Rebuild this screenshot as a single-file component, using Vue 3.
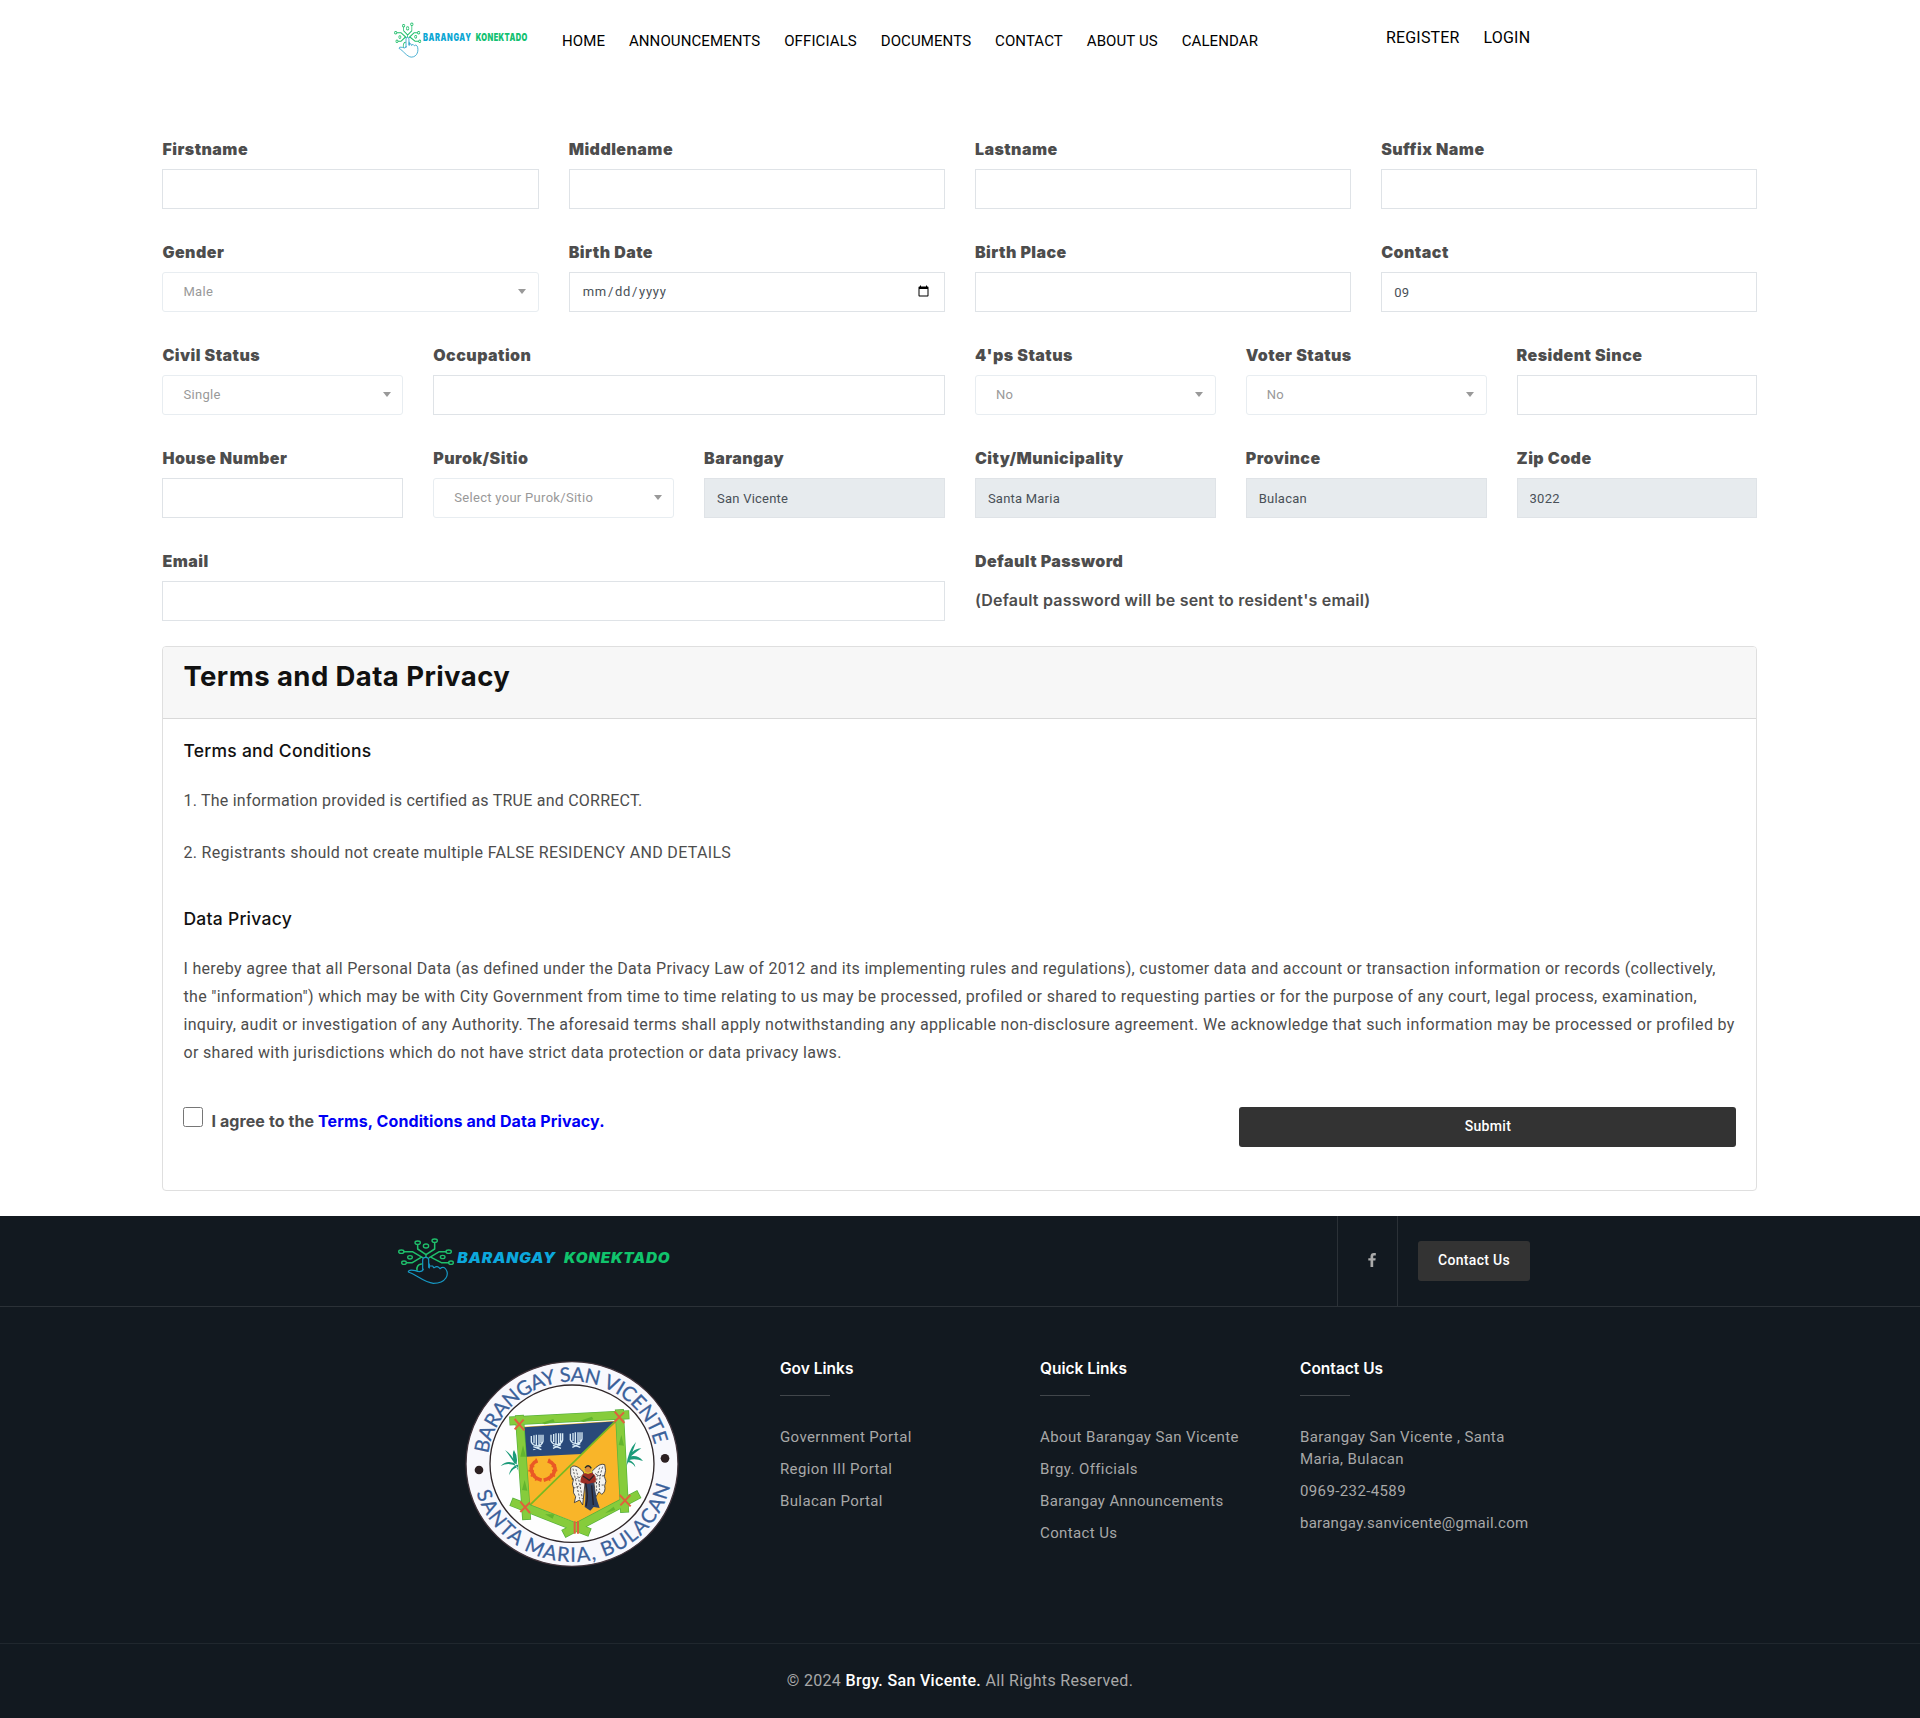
<script setup>
const navLinks = ['HOME', 'ANNOUNCEMENTS', 'OFFICIALS', 'DOCUMENTS', 'CONTACT', 'ABOUT US', 'CALENDAR']
const accountLinks = ['REGISTER', 'LOGIN']

// span is the number of grid columns out of 12
const fields = [
  { label: 'Firstname', type: 'text', span: 3 },
  { label: 'Middlename', type: 'text', span: 3 },
  { label: 'Lastname', type: 'text', span: 3 },
  { label: 'Suffix Name', type: 'text', span: 3 },
  { label: 'Gender', type: 'select', span: 3, value: 'Male' },
  { label: 'Birth Date', type: 'date', span: 3 },
  { label: 'Birth Place', type: 'text', span: 3 },
  { label: 'Contact', type: 'text', span: 3, value: '09' },
  { label: 'Civil Status', type: 'select', span: 2, value: 'Single' },
  { label: 'Occupation', type: 'text', span: 4 },
  { label: "4'ps Status", type: 'select', span: 2, value: 'No' },
  { label: 'Voter Status', type: 'select', span: 2, value: 'No' },
  { label: 'Resident Since', type: 'text', span: 2 },
  { label: 'House Number', type: 'text', span: 2 },
  { label: 'Purok/Sitio', type: 'select', span: 2, value: 'Select your Purok/Sitio' },
  { label: 'Barangay', type: 'text', span: 2, value: 'San Vicente', readonly: true },
  { label: 'City/Municipality', type: 'text', span: 2, value: 'Santa Maria', readonly: true },
  { label: 'Province', type: 'text', span: 2, value: 'Bulacan', readonly: true },
  { label: 'Zip Code', type: 'text', span: 2, value: '3022', readonly: true },
  { label: 'Email', type: 'text', span: 6 },
  { label: 'Default Password', type: 'note', span: 6, value: "(Default password will be sent to resident's email)" }
]

const privacyLines = [
  'I hereby agree that all Personal Data (as defined under the Data Privacy Law of 2012 and its implementing rules and regulations), customer data and account or transaction information or records (collectively,',
  'the "information") which may be with City Government from time to time relating to us may be processed, profiled or shared to requesting parties or for the purpose of any court, legal process, examination,',
  'inquiry, audit or investigation of any Authority. The aforesaid terms shall apply notwithstanding any applicable non-disclosure agreement. We acknowledge that such information may be processed or profiled by',
  'or shared with jurisdictions which do not have strict data protection or data privacy laws.'
]

const footerColumns = [
  { title: 'Gov Links', items: ['Government Portal', 'Region III Portal', 'Bulacan Portal'] },
  { title: 'Quick Links', items: ['About Barangay San Vicente', 'Brgy. Officials', 'Barangay Announcements', 'Contact Us'] },
  { title: 'Contact Us', items: ['Barangay San Vicente , Santa Maria, Bulacan', '0969-232-4589', 'barangay.sanvicente@gmail.com'] }
]
</script>

<template>
  <div class="page">
    <!-- Shared symbol: circuit nodes above a pointing hand -->
    <svg class="defs" width="0" height="0" aria-hidden="true">
      <defs>
        <g id="mark" fill="none" stroke-linecap="round" stroke-linejoin="round">
          <g stroke="#1fbf6b" stroke-width="4.6">
            <path d="M113 104V117L138 134L164 117V98M72 125H97L128 143M198 125H178L148 143M206 158H184L155 143M80 158H97L122 143M138 134V142M111 181Q109 164 124 162" />
            <g stroke-width="4">
              <ellipse cx="64" cy="125" rx="8" ry="5" /><ellipse cx="113" cy="98" rx="8" ry="5" />
              <ellipse cx="164" cy="92" rx="8" ry="5" /><ellipse cx="206" cy="125" rx="8" ry="5" />
              <ellipse cx="213" cy="158" rx="7" ry="5" /><ellipse cx="72" cy="158" rx="7" ry="5" />
              <ellipse cx="138" cy="108" rx="8" ry="6" /><ellipse cx="90" cy="142" rx="7" ry="5" />
              <ellipse cx="188" cy="141" rx="7" ry="5" />
            </g>
          </g>
          <path stroke="#1698c4" stroke-width="3.6" d="M128 182V150Q128 142 137 142Q146 142 146 150V172M148 162V174M148 168H158L161 173M163 173Q172 165 180 176Q190 168 197 177C208 192 200 220 160 220C132 218 110 194 85 186Q84 178 106 182Q124 190 130 178" />
        </g>
      </defs>
    </svg>

    <header class="header">
      <svg class="brand" width="182" height="90" viewBox="0 0 546 270">
        <use href="#mark" transform="translate(16 2) scale(.485 .77)" />
        <text class="brand-text small" transform="translate(129 124) scale(.72 1)" textLength="200" fill="#0ca7d4">BARANGAY</text>
        <text class="brand-text small" transform="translate(287 124) scale(.72 1)" textLength="215" fill="#12c172">KONEKTADO</text>
      </svg>
      <nav class="nav">
        <a v-for="link in navLinks" :key="link">{{ link }}</a>
      </nav>
      <nav class="account">
        <a v-for="link in accountLinks" :key="link">{{ link }}</a>
      </nav>
    </header>

    <main class="content">
      <form class="form" @submit.prevent>
        <div v-for="f in fields" :key="f.label" class="field" :class="'span-' + f.span">
          <label>{{ f.label }}</label>
          <div v-if="f.type === 'select'" class="select">
            <span>{{ f.value }}</span>
            <i class="caret"></i>
          </div>
          <div v-else-if="f.type === 'note'" class="note">{{ f.value }}</div>
          <input v-else class="input" :class="{ locked: f.readonly }" :type="f.type" :value="f.value" :readonly="f.readonly" />
        </div>
      </form>

      <section class="card">
        <div class="card-head"><h3>Terms and Data Privacy</h3></div>
        <div class="card-body">
          <h4>Terms and Conditions</h4>
          <p class="rule">1. The information provided is certified as TRUE and CORRECT.</p>
          <p class="rule">2. Registrants should not create multiple FALSE RESIDENCY AND DETAILS</p>
          <h4 class="second">Data Privacy</h4>
          <p class="privacy"><span v-for="line in privacyLines" :key="line">{{ line }}</span></p>
          <div class="agree">
            <label class="agree-label">
              <input type="checkbox" />
              <span>I agree to the <a>Terms, Conditions and Data Privacy.</a></span>
            </label>
            <button class="submit" type="button">Submit</button>
          </div>
        </div>
      </section>
    </main>

    <footer class="footer">
      <div class="footer-top">
        <div class="wrap top-row">
          <svg class="footer-brand" width="320" height="90" viewBox="0 18 960 270">
            <use href="#mark" />
            <text class="brand-text italic" x="232" y="159" textLength="296" lengthAdjust="spacingAndGlyphs" fill="#0ca7dc">BARANGAY</text>
            <text class="brand-text italic" x="552" y="159" textLength="319" lengthAdjust="spacingAndGlyphs" fill="#10c46c">KONEKTADO</text>
          </svg>
          <div class="social">
            <svg width="8" height="14" viewBox="0 0 8 14"><path fill="#aaa" d="M7.8.1V2.4H6.5C5.4 2.4 5.2 2.9 5.2 3.7V5.2H7.7L7.4 7.6H5.2V14H2.5V7.6H.3V5.2H2.5V3.4C2.5 1.2 3.8 0 5.8 0Z" /></svg>
          </div>
          <button class="contact" type="button">Contact Us</button>
        </div>
      </div>

      <div class="wrap footer-main">
        <div class="seal">
          <svg width="240" height="230" viewBox="0 0 720 690">
            <defs>
              <path id="arc-top" d="M115 311A254 247 0 0 1 615 288.4" />
              <path id="arc-bottom" d="M79 428A301 293 0 0 0 663 395" />
            </defs>
            <ellipse cx="366" cy="342" rx="318" ry="307" fill="#f8f8fd" stroke="#41343b" stroke-width="4" />
            <ellipse cx="366" cy="341" rx="246" ry="236" fill="#fefefe" stroke="#302729" stroke-width="4" />
            <g class="seal-text">
              <text><textPath href="#arc-top" textLength="698">BARANGAY SAN VICENTE</textPath></text>
              <text><textPath href="#arc-bottom" textLength="780">SANTA MARIA, BULACAN</textPath></text>
            </g>
            <circle cx="87" cy="360" r="13" fill="#2c2022" /><circle cx="645" cy="325" r="13" fill="#2c2022" />
            <g fill="#1b9b79">
              <path d="M205 362Q188 328 165 300Q181 310 190 326Q186 308 192 300Q204 320 200 340ZM204 345Q173 325 152 348Q178 334 204 352ZM201 344Q180 352 177 376Q188 354 204 352Z" />
              <path d="M529 350Q533 302 558 276Q553 292 547 306Q559 295 574 295Q558 306 543 319Q565 315 579 333Q555 324 538 330Q555 338 556 352Q547 337 534 337Z" />
            </g>
            <path fill="#f9b529" d="M222 230L503 212L519 452L380 518L232 462Z" />
            <path fill="#29497a" d="M222 232L500 214L394 312L228 320Z" />
            <path stroke="#78ba21" stroke-width="5" d="M504 206L235 470" />
            <g stroke="#55b13c" stroke-width="27"><path d="M178 213L538 194M208 195L230 510M508 178L524 488M183 455L420 548M568 432L340 552" /></g>
            <g stroke="#86cc3c" stroke-width="23"><path d="M180 213L536 194M208 197L230 508M508 180L524 486M185 456L418 547M566 433L342 551" /></g>
            <g fill="#63b52e"><path d="M275 219l35-12 4 8-30 8ZM390 212l36-12 4 8-30 8ZM211 320l8-34 9 34ZM506 285l8-30 8 32ZM216 420l8-30 8 32ZM285 493l28 0-5 13ZM465 490l26-20 5 10Z" /></g>
            <g stroke="#e0603c" stroke-width="6"><path d="M194 207l29 34M221 209l-27 29M494 185l29 34M522 187l-29 29M211 455l29 34M240 457l-29 29M509 435l33 34M541 435l-30 31M374 514v37M384 514v37" /></g>
            <g fill="none" stroke="#d8eaf5" stroke-width="4">
              <path id="trident" d="M244 258V276Q248 286 262 288Q276 286 279 274V254M252 256V280M259 254V286M267 254V286M273 254V280M250 299L274 288M250 290L274 299" />
              <use href="#trident" x="59" y="-4" /><use href="#trident" x="117" y="-7" />
            </g>
            <g fill="none" stroke="#ea5925">
              <path stroke-width="11" d="M262 332C232 344 241 382 275 391M294 332C329 345 317 381 281 391" />
              <path stroke-width="5" d="M239 346l14 4M235 362l17 1M242 379l14-7M258 326l3 13M318 344l-13 6M322 361l-16 1M315 379l-15-7M299 326l-4 13M256 392l5-10M300 392l-6-10" />
            </g>
            <g stroke="#303036" stroke-width="2.5" stroke-linejoin="round">
              <path fill="#f4f3ee" d="M400 366C386 349 368 342 362 354Q358 375 370 390Q364 402 371 415Q367 429 377 440L373 458L389 450L398 465L406 391ZM426 364Q450 337 464 344Q470 361 463 379Q472 394 464 407Q468 426 455 433L447 425L437 441L431 391Z" />
              <path fill="none" stroke-dasharray="6 5" d="M369 356Q379 400 389 446M378 358Q390 400 397 447M458 350Q445 390 449 420M449 353Q435 390 441 430M365 387Q387 388 398 374M370 414Q387 412 398 397M462 377Q446 381 434 369M461 405Q447 407 434 393" />
            </g>
            <path fill="#314263" d="M403 390L430 389Q434 433 449 474L431 471L421 482L404 471Q409 431 403 390Z" />
            <path fill="#9b2e25" d="M403 370Q392 375 391 397L408 403L437 397Q441 375 426 369Z" />
            <circle cx="414" cy="358" r="12" fill="#d98b3c" stroke="#dcd329" stroke-width="3" />
            <path stroke="#262128" stroke-width="4" fill="none" d="M405 354Q414 340 424 355M399 378L418 391L432 376M407 399Q416 440 408 469M425 406L430 465" />
          </svg>
        </div>
        <div v-for="col in footerColumns" :key="col.title" class="col">
          <h5>{{ col.title }}</h5>
          <ul><li v-for="item in col.items" :key="item">{{ item }}</li></ul>
        </div>
      </div>

      <div class="copyright">© 2024 <b>Brgy. San Vicente.</b> All Rights Reserved.</div>
    </footer>
  </div>
</template>

<style>
body { margin: 0; background: #fff; }
</style>

<style scoped>
* { box-sizing: border-box; }
.page { font-family: Roboto, sans-serif; color: #4d4d4d; font-size: 16px; letter-spacing: .33px; }
.defs { display: block; }
h3, h4, h5, p, ul { margin: 0; padding: 0; }
.header { display: flex; height: 137px; padding-left: 380px; color: #000; }
.brand { display: block; }
.brand-text { font-family: Inter, sans-serif; font-weight: 900; }
.small { font-size: 31px; letter-spacing: 0; }
.italic { font-size: 42px; font-style: italic; letter-spacing: 2px; }
.nav { display: flex; gap: 23.9px; padding-top: 29px; font-size: 15px; line-height: 24px; letter-spacing: .1px; width: 824px; }
.account { display: flex; gap: 24px; padding-top: 26px; line-height: 24px; letter-spacing: .17px; }

.content { width: 1595px; margin-left: 162.45px; }
.form { display: grid; grid-template-columns: repeat(12, 1fr); column-gap: 30px; row-gap: 31px; }
.span-2 { grid-column: span 2; }
.span-3 { grid-column: span 3; }
.span-4 { grid-column: span 4; }
.span-6 { grid-column: span 6; }
.field { min-width: 0; height: 72px; }
.field label { display: block; height: 32px; line-height: 24px; font-family: Inter, sans-serif; font-size: 16px; font-weight: 900; letter-spacing: .45px; white-space: nowrap; }
.input { display: block; width: 100%; height: 40px; padding: 6px 12px; border: 1px solid #dfe3e7; background: #fff; color: #495057; font-family: Roboto, sans-serif; font-size: 13px; letter-spacing: .22px; outline: 0; border-radius: 0; }
.input[type="date"] { letter-spacing: .7px; padding: 5px 12px 7px; }
.locked { background: #e7ebee; }
.select { display: flex; align-items: center; justify-content: space-between; height: 40px; padding: 0 11.5px 2px 20px; border: 1px solid #e8edf1; border-radius: 3px; color: #999; font-size: 13px; letter-spacing: .3px; }
.caret { border: 4.5px solid transparent; border-top: 5px solid #999; border-bottom: 0; }
.note { padding-top: 7px; line-height: 24px; font-family: Inter, sans-serif; font-weight: 600; letter-spacing: .2px; }

.card { margin-top: 25px; height: 545px; border: 1px solid #dfdfdf; border-radius: 4px; overflow: hidden; }
.card-head { height: 72px; padding: 12px 20px; background: #f7f7f7; border-bottom: 1px solid #d9d9d9; }
.card-head h3 { font-family: Inter, sans-serif; font-size: 27.5px; line-height: 34px; font-weight: 700; color: #111; letter-spacing: .42px; }
.card-body { padding: 21px 20px 0; }
.card-body h4 { font-family: Inter, sans-serif; font-size: 17.5px; line-height: 22px; font-weight: 500; color: #111; letter-spacing: .25px; }
.card-body h4.second { margin-top: 41px; }
.rule { margin-top: 25px; line-height: 28px; letter-spacing: .23px; }
.rule + .rule { margin-top: 24px; letter-spacing: .32px; }
.privacy { margin-top: 25px; line-height: 28px; letter-spacing: .347px; }
.privacy span { display: block; white-space: nowrap; }
.privacy span:first-child { letter-spacing: .32px; }
.agree { display: flex; justify-content: space-between; margin-top: 40px; }
.agree-label { display: flex; font-family: Inter, sans-serif; font-weight: 700; letter-spacing: .1px; }
.agree-label input { width: 20px; height: 20px; margin: 0 8px 0 0; }
.agree-label span { line-height: 24px; padding-top: 2px; }
.agree-label a { color: #0000f5; }
.submit, .contact { border: 0; border-radius: 3px; background: #333; color: #fff; font-family: Roboto, sans-serif; font-size: 14px; font-weight: 500; letter-spacing: .3px; height: 40px; padding: 0 0 2px; }
.submit { width: 497px; }

.footer { margin-top: 25px; height: 502px; background: #121920; color: #a8a8a8; }
.footer-top { height: 91px; border-bottom: 1px solid #2b3137; }
.wrap { width: 1140px; margin: 0 auto; }
.top-row { display: flex; height: 90px; }
.footer-brand { display: block; margin-left: -10px; }
.social { display: flex; align-items: center; justify-content: center; width: 61px; margin-left: 637px; padding: 0 0 2px 9px; border: solid #2b3137; border-width: 0 1px; }
.contact { width: 112px; margin: 25px 0 0 20px; }
.footer-main { display: flex; height: 336px; }
.seal { flex: none; width: 390px; padding: 43px 0 0 60px; }
.seal svg { display: block; }
.seal-text { font-family: Lato, sans-serif; font-size: 60px; letter-spacing: 0; fill: #3a609a; stroke: #3a609a; stroke-width: .8px; }
.col { width: 260px; padding-top: 51px; flex: none; }
.col:last-child { width: 230px; }
.col h5 { font-family: Inter, sans-serif; font-size: 15.5px; line-height: 22px; font-weight: 600; color: #fff; letter-spacing: 0; }
.col h5::after { content: ""; display: block; width: 50px; height: 1px; margin-top: 15px; background: #41464b; }
.col ul { list-style: none; margin-top: 30px; }
.col li { margin-bottom: 10px; font-size: 15px; line-height: 22px; letter-spacing: .38px; }
.col:last-child li:last-child { letter-spacing: .27px; }
.copyright { height: 75px; padding-top: 25px; border-top: 1px solid #20272e; text-align: center; line-height: 24px; letter-spacing: .33px; }
.copyright b { font-weight: 500; color: #fff; }
</style>
